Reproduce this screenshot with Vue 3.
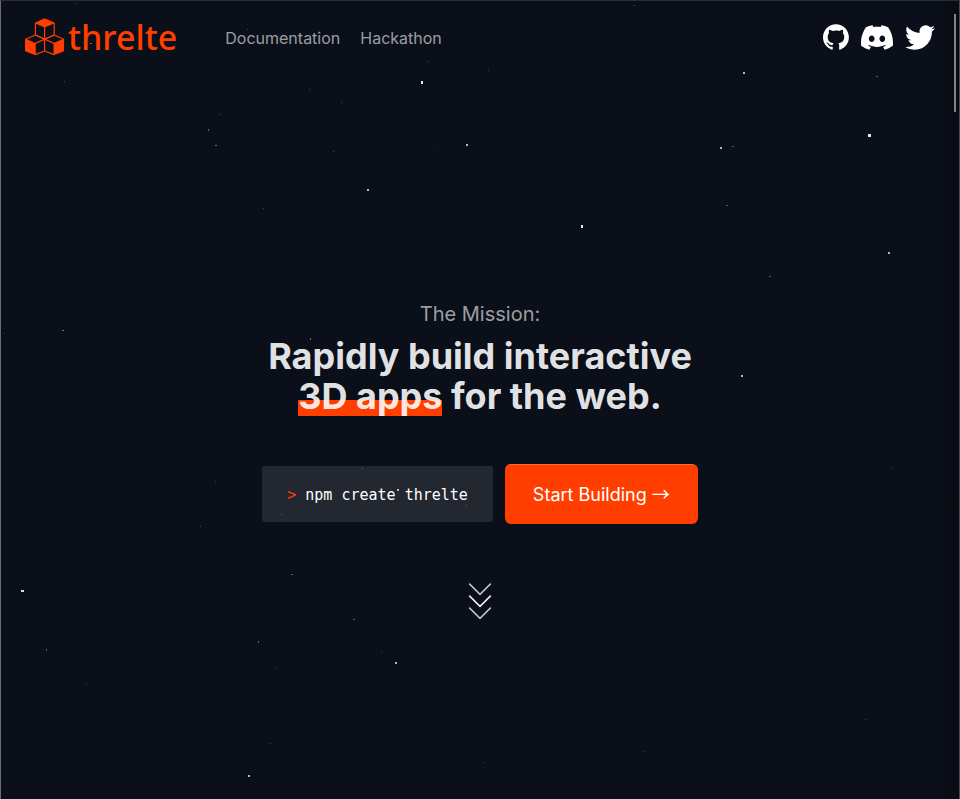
<script setup>
import { ref } from 'vue'

const copied = ref(false)
function copy() {
  copied.value = true
  navigator.clipboard?.writeText('npm create threlte').catch(() => {})
}

// x, y, width, height, opacity
const stars = [
  [634, 5, 1, 1, 0.25], [76, 3, 1, 1, 0.25], [90, 43, 2, 1, 0.4], [247, 29, 1, 1, 0.2],
  [427, 61, 1, 1, 0.25], [64, 81, 1, 1, 0.25], [309, 89, 1, 1, 0.25], [341, 102, 1, 1, 0.25],
  [220, 114, 1, 1, 0.25], [208, 129, 1, 2, 0.35], [215, 145, 2, 1, 0.4], [333, 151, 1, 1, 0.25],
  [263, 208, 1, 1, 0.2], [421, 81, 2, 3, 0.9], [466, 144, 2, 2, 0.7], [367, 189, 2, 2, 0.7],
  [435, 144, 1, 1, 0.1], [488, 70, 1, 1, 0.2], [743, 72, 2, 2, 0.7], [876, 76, 2, 1, 0.35],
  [868, 134, 3, 3, 0.9], [720, 147, 2, 2, 0.7], [732, 146, 2, 1, 0.3], [726, 205, 2, 1, 0.3],
  [581, 225, 2, 3, 0.9], [888, 252, 2, 2, 0.7], [769, 276, 2, 1, 0.3], [4, 333, 1, 1, 0.2],
  [62, 330, 2, 1, 0.4], [310, 338, 1, 2, 0.4], [741, 375, 2, 2, 0.7], [568, 391, 1, 1, 0.25],
  [892, 468, 1, 1, 0.2], [215, 481, 1, 1, 0.2], [362, 468, 1, 1, 0.25], [397, 489, 2, 2, 0.7],
  [466, 505, 1, 1, 0.25], [281, 514, 1, 1, 0.25], [200, 526, 1, 1, 0.25], [291, 574, 2, 1, 0.35],
  [21, 590, 3, 2, 0.85], [353, 619, 2, 1, 0.35], [258, 641, 1, 2, 0.35], [46, 649, 1, 2, 0.35],
  [381, 652, 1, 1, 0.2], [395, 662, 2, 2, 0.7], [275, 667, 1, 1, 0.2], [86, 684, 1, 1, 0.25],
  [270, 743, 1, 1, 0.25], [248, 775, 2, 2, 0.7], [551, 697, 1, 1, 0.08], [865, 719, 1, 1, 0.2],
  [643, 751, 1, 1, 0.2], [483, 762, 1, 1, 0.2]
]
</script>

<template>
  <div class="page">
    <header class="header">
      <a class="brand" href="#" aria-label="threlte home">
        <svg class="cubes" width="40" height="38" viewBox="0 0 40 38" aria-hidden="true">
          <g fill="#ff3e00" stroke="#ff3e00" stroke-linejoin="round">
            <path d="M19.6 .8 29.2 5 19.6 9 10.4 5z" />
            <path d="M.6 21.2 10.2 25.4V36.6L.6 33z" />
            <path d="M38.6 21.2 29 25.4V36.6L38.6 33z" />
          </g>
          <g fill="none" stroke="#ff3e00" stroke-width="1.2" stroke-linejoin="round">
            <path d="M10.4 5V17L19.6 21.2 29.2 17V5M19.6 9V33" />
            <path d="M.6 21.2 10.4 17M10.2 25.4 29.2 17M10.2 36.6 19.6 33 29 36.6" />
            <path d="M38.6 21.2 29.2 17M29 25.4 10.4 17" />
          </g>
        </svg>
        <span class="wordmark">threlte</span>
      </a>
      <nav class="nav">
        <a href="#docs">Documentation</a>
        <a href="#hackathon">Hackathon</a>
      </nav>
      <div class="social">
        <a href="#github" aria-label="GitHub">
          <svg width="26" height="26" viewBox="0 0 98 96" fill="currentColor"><path d="M48.854 0C21.839 0 0 22 0 49.217c0 21.756 13.993 40.172 33.405 46.69 2.427.49 3.316-1.059 3.316-2.362 0-1.141-.08-5.052-.08-9.127-13.59 2.934-16.42-5.867-16.42-5.867-2.184-5.704-5.42-7.17-5.42-7.17-4.448-3.015.324-3.015.324-3.015 4.934.326 7.523 5.052 7.523 5.052 4.367 7.496 11.404 5.378 14.235 4.074.404-3.178 1.699-5.378 3.074-6.6-10.839-1.141-22.243-5.378-22.243-24.283 0-5.378 1.94-9.778 5.014-13.2-.485-1.222-2.184-6.275.486-13.038 0 0 4.125-1.304 13.426 5.052a46.97 46.97 0 0 1 12.214-1.63c4.125 0 8.33.571 12.213 1.63 9.302-6.356 13.427-5.052 13.427-5.052 2.67 6.763.97 11.816.485 13.038 3.155 3.422 5.015 7.822 5.015 13.2 0 18.905-11.404 23.06-22.324 24.283 1.78 1.548 3.316 4.481 3.316 9.126 0 6.6-.08 11.897-.08 13.526 0 1.304.89 2.853 3.316 2.364 19.412-6.52 33.405-24.935 33.405-46.691C97.707 22 75.788 0 48.854 0z" /></svg>
        </a>
        <a href="#discord" aria-label="Discord">
          <svg width="32" height="25" viewBox="0 2.8 24 18.4" fill="currentColor"><path d="M20.317 4.37a19.791 19.791 0 0 0-4.885-1.515.074.074 0 0 0-.079.037c-.211.375-.445.865-.608 1.25-1.845-.277-3.68-.277-5.487 0-.164-.394-.406-.875-.618-1.25a.077.077 0 0 0-.079-.037A19.736 19.736 0 0 0 3.677 4.37a.07.07 0 0 0-.032.028C.533 9.046-.319 13.58.099 18.058a.082.082 0 0 0 .031.056c2.053 1.508 4.041 2.423 5.993 3.03a.078.078 0 0 0 .084-.028c.462-.63.873-1.295 1.226-1.994a.076.076 0 0 0-.042-.106c-.652-.248-1.274-.55-1.872-.892a.077.077 0 0 1-.008-.128c.126-.094.252-.192.372-.291a.074.074 0 0 1 .078-.011c3.928 1.793 8.18 1.793 12.061 0a.074.074 0 0 1 .079.01c.12.098.246.198.373.292a.077.077 0 0 1-.007.128 12.299 12.299 0 0 1-1.873.891.077.077 0 0 0-.04.107c.36.698.771 1.363 1.225 1.993a.076.076 0 0 0 .084.029c1.961-.607 3.95-1.522 6.002-3.03a.077.077 0 0 0 .032-.055c.5-5.177-.838-9.674-3.549-13.66a.061.061 0 0 0-.031-.029zM8.02 15.331c-1.183 0-2.157-1.086-2.157-2.419s.955-2.419 2.157-2.419c1.21 0 2.176 1.095 2.157 2.419 0 1.333-.956 2.419-2.157 2.419zm7.975 0c-1.183 0-2.157-1.086-2.157-2.419s.955-2.419 2.157-2.419c1.21 0 2.176 1.095 2.157 2.419 0 1.333-.946 2.419-2.157 2.419z" /></svg>
        </a>
        <a href="#twitter" aria-label="Twitter">
          <svg width="30" height="25" viewBox="0 2.2 24 19.6" fill="currentColor"><path d="M23.953 4.57a10 10 0 0 1-2.825.775 4.958 4.958 0 0 0 2.163-2.723c-.951.555-2.005.959-3.127 1.184a4.92 4.92 0 0 0-8.384 4.482C7.69 8.095 4.067 6.13 1.64 3.162a4.822 4.822 0 0 0-.666 2.475c0 1.71.87 3.213 2.188 4.096a4.904 4.904 0 0 1-2.228-.616v.06a4.923 4.923 0 0 0 3.946 4.827 4.996 4.996 0 0 1-2.212.085 4.936 4.936 0 0 0 4.604 3.417 9.867 9.867 0 0 1-6.102 2.105c-.39 0-.779-.023-1.17-.067a13.995 13.995 0 0 0 7.557 2.209c9.053 0 13.998-7.496 13.998-13.985 0-.21 0-.42-.015-.63A9.935 9.935 0 0 0 24 4.59z" /></svg>
        </a>
      </div>
    </header>

    <main class="hero">
      <p class="tagline">The Mission:</p>
      <h1 class="title">Rapidly build interactive<br /><span class="mark">3D apps</span> for the web.</h1>
      <div class="actions">
        <button class="command" type="button" @click="copy"><span class="prompt">&gt;</span> npm create threlte</button>
        <a class="start" href="#start">Start Building <span class="arrow">→</span></a>
      </div>
      <svg class="chevrons" width="24" height="38" viewBox="0 0 24 38" fill="none" stroke="#fff" stroke-width="1.5" aria-hidden="true">
        <path d="M1.2 1.6 12 12.4 22.8 1.6" opacity=".75" />
        <path d="M1.2 13.6 12 24.4 22.8 13.6" opacity=".95" />
        <path d="M1.2 25.6 12 36.4 22.8 25.6" opacity=".75" />
      </svg>
    </main>

    <svg class="stars" aria-hidden="true" shape-rendering="crispEdges">
      <rect v-for="(s, i) in stars" :key="i" :x="s[0]" :y="s[1]" :width="s[2]" :height="s[3]" fill="#fff" :opacity="s[4]" />
    </svg>
    <div class="edge"></div>
    <div class="thumb"></div>
  </div>
</template>

<style>
body {
  background: #0a0f19;
}
</style>

<style scoped>
.page {
  position: relative;
  box-sizing: border-box;
  min-height: 100vh;
  overflow: hidden;
  display: flex;
  flex-direction: column;
  border: solid #6c6c69;
  border-width: 1px 1px 0;
  border-top-color: #2d2d30;
  border-right-color: #4b4b4b;
  background: #0a0f19;
  color: #fff;
  font-family: Inter, "Liberation Sans", sans-serif;
}
a {
  color: inherit;
  text-decoration: none;
}
.header {
  display: flex;
  align-items: center;
  height: 72px;
  padding: 0 24px;
}
.brand {
  display: flex;
  align-items: center;
  gap: 3px;
  color: #ff3e00;
}
.wordmark {
  font: 500 34px/38px "Noto Sans", sans-serif;
}
.nav {
  display: flex;
  gap: 20px;
  margin-left: 48px;
  padding-top: 2px;
  font-size: 16px;
  line-height: 24px;
  color: rgba(255, 255, 255, 0.6);
}
.social {
  display: flex;
  align-items: center;
  gap: 12px;
  margin-left: auto;
}
.social svg {
  display: block;
}
.hero {
  flex: 1;
  display: flex;
  flex-direction: column;
  align-items: center;
  padding: 227px 24px 48px;
}
.tagline {
  margin: 0 0 8px;
  font-size: 20px;
  line-height: 28px;
  color: rgba(255, 255, 255, 0.6);
}
.title {
  margin: 0 0 48px;
  font-size: 36px;
  line-height: 40px;
  font-weight: 700;
  text-align: center;
  color: rgba(255, 255, 255, 0.9);
}
.mark {
  display: inline-block;
  background: linear-gradient(#ff3e00, #ff3e00) left bottom / 100% 16px no-repeat;
}
.actions {
  display: flex;
  align-items: center;
  justify-content: center;
  flex-wrap: wrap;
  gap: 12px;
}
.command {
  height: 56px;
  padding: 2px 25px 0;
  border: 0;
  border-radius: 2px;
  background: #23272f;
  color: #fff;
  font: 15px/24px "DejaVu Sans Mono", monospace;
}
.prompt {
  color: #ff3e00;
}
.start {
  box-sizing: border-box;
  height: 60px;
  padding: 0 28px;
  border-top: 1px solid #ff6533;
  border-radius: 6px;
  background: #ff3e00;
  font-size: 18px;
  line-height: 59px;
}
.arrow {
  font-family: "Noto Sans CJK JP", sans-serif;
  line-height: 1;
}
.chevrons {
  margin-top: 58px;
}
.stars {
  position: absolute;
  top: -1px;
  left: -1px;
  width: 100%;
  height: 100%;
  pointer-events: none;
}
.edge {
  position: absolute;
  top: 0;
  right: 0;
  bottom: 0;
  width: 24px;
  background: linear-gradient(90deg, transparent, rgba(0, 0, 0, 0.25));
  pointer-events: none;
}
.thumb {
  position: absolute;
  top: 13px;
  right: 3px;
  width: 2px;
  height: 98px;
  background: #858585;
}
</style>
